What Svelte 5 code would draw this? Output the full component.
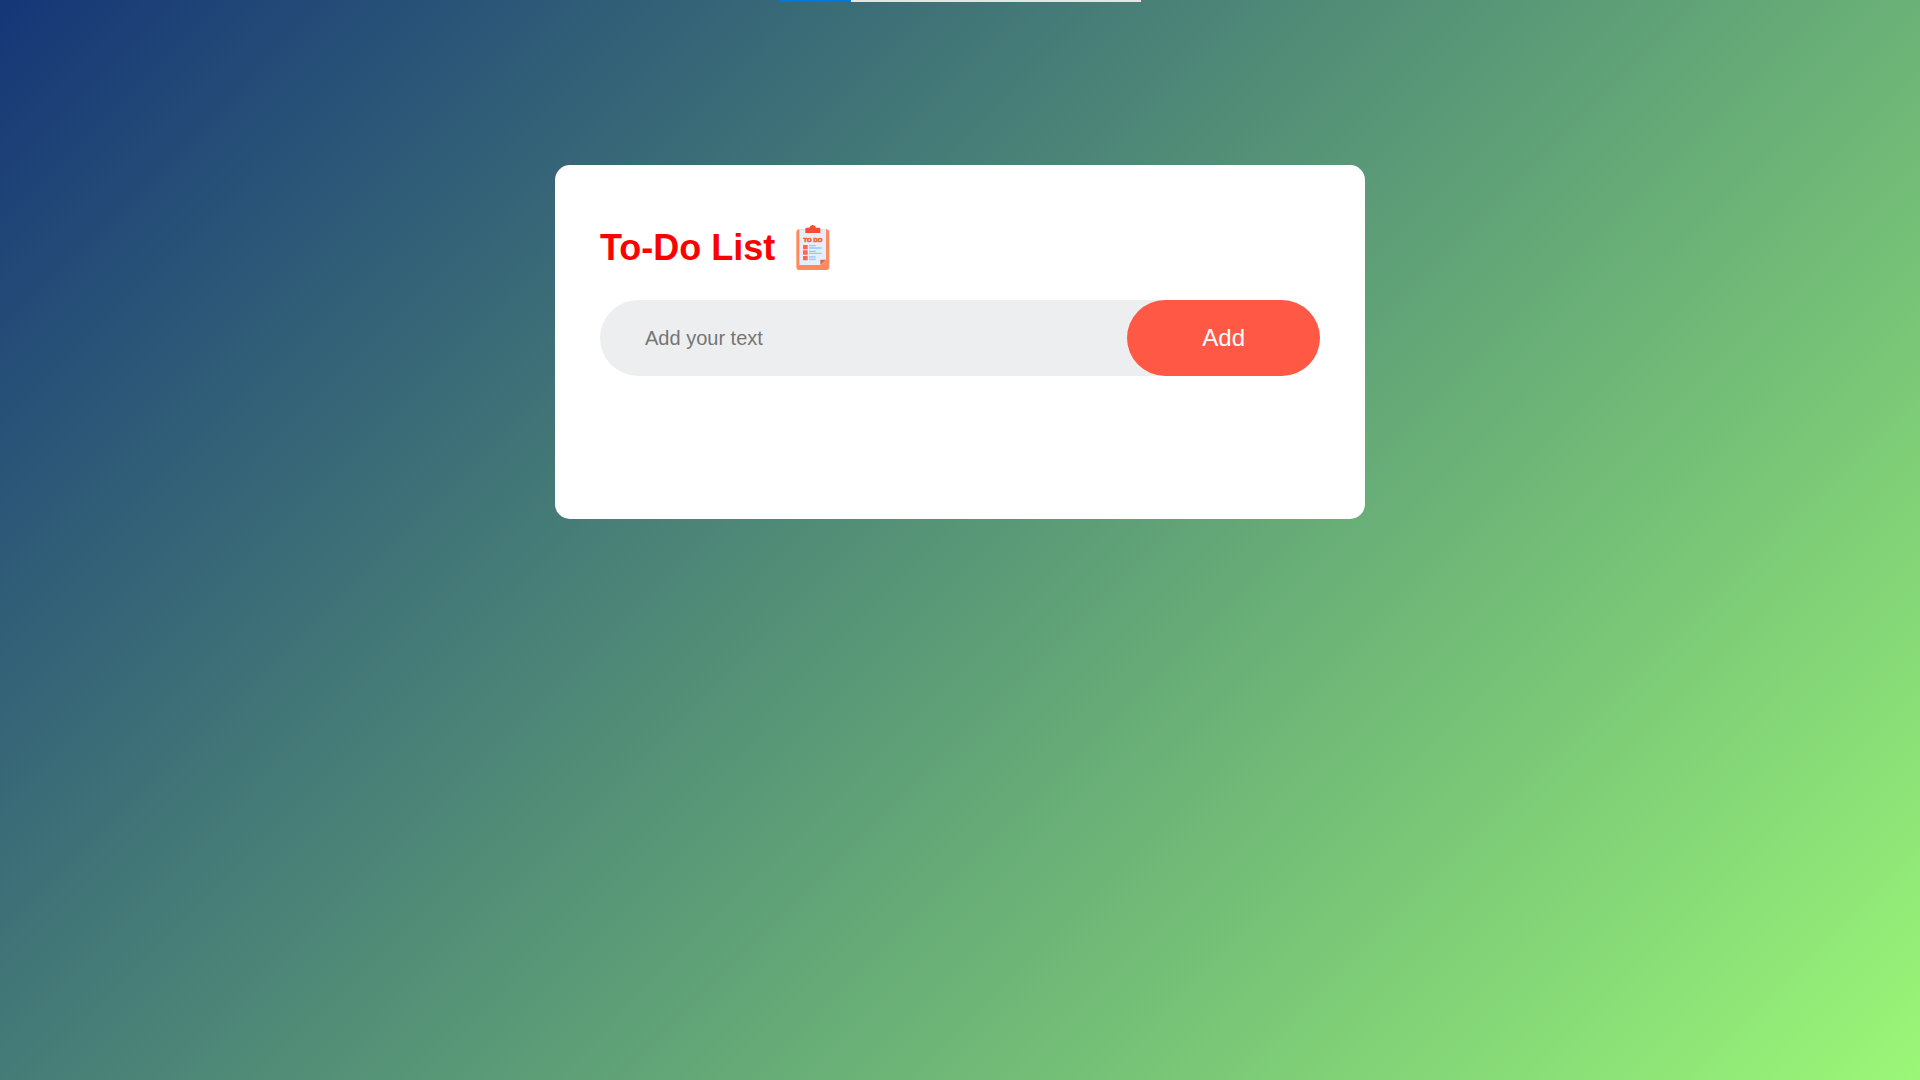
<script>
  let text = $state('');
  let tasks = $state([]);

  function addTask(event) {
    event.preventDefault();
    if (!text.trim()) return;
    tasks.push(text.trim());
    text = '';
  }
</script>

<div class="page">
  <div class="progress"><div class="progress-value"></div></div>
  <main class="card">
    <h1>
      To-Do List
      <svg viewBox="0 0 135 135" aria-hidden="true">
        <rect x="19" y="13" width="99" height="122" rx="10" fill="#ff8a5c" />
        <path d="M28 13H108V104L92 120H28Z" fill="#e4eefc" />
        <path d="M108 104H91V120Z" fill="#e5604a" />
        <path d="M46 24V12Q46 8 50 8H58Q60 0 68 0T78 8H87Q91 8 91 12V24Z" fill="#fa4b37" />
        <text x="69" y="50" text-anchor="middle">TO DO</text>
        <path d="M39 60H53V73H39ZM39 76H53V89H39ZM39 93H53V106H39Z" fill="#fa6650" />
        <path
          d="M57 62H77M57 69H95M57 79H77M57 85H95M57 96H77M57 103H77"
          stroke="#93caff"
          stroke-width="4"
        />
      </svg>
    </h1>
    <form class="row" onsubmit={addTask}>
      <input type="text" placeholder="Add your text" aria-label="Add your text" bind:value={text} />
      <button type="submit">Add</button>
    </form>
    <ul>
      {#each tasks as task}
        <li>{task}</li>
      {/each}
    </ul>
  </main>
</div>

<style>
  :global(body) {
    margin: 0;
    font-family: 'Liberation Sans', Arial, sans-serif;
  }

  .page {
    box-sizing: border-box;
    min-height: 100vh;
    padding: 0 15px 15px;
    background: linear-gradient(135deg, #153677, #9bf777);
  }

  .progress {
    width: 362px;
    max-width: 100%;
    height: 2px;
    margin: 0 auto;
    background: #e5e5e5;
  }

  .progress-value {
    width: 20%;
    height: 100%;
    background: #0078d7;
  }

  .card {
    box-sizing: border-box;
    max-width: 810px;
    margin: 163px auto 0;
    padding: 60px 45px 105px;
    border-radius: 15px;
    background: #fff;
  }

  h1 {
    display: flex;
    align-items: center;
    gap: 15px;
    margin: 0 0 30px;
    color: #f00;
    font-size: 36px;
    line-height: 45px;
  }

  svg {
    width: 45px;
    height: 45px;
    flex: none;
  }

  svg text {
    fill: #fa6432;
    stroke: #fa6432;
    stroke-width: 2px;
    font-size: 18px;
    font-weight: 700;
  }

  .row {
    display: flex;
    border-radius: 45px;
    background: #edeef0;
  }

  input {
    flex: 1;
    min-width: 0;
    padding: 15px 15px 15px 45px;
    border: 0;
    outline: 0;
    background: transparent;
    color: #222;
    font: 20px 'Liberation Sans', Arial, sans-serif;
  }

  input::placeholder {
    color: #757575;
  }

  button {
    padding: 24px 75px;
    border: 0;
    border-radius: 60px;
    background: #ff5945;
    color: #fff;
    font: 24px/28px 'Liberation Sans', Arial, sans-serif;
    cursor: pointer;
  }

  ul {
    min-height: 38px;
    margin: 0;
    padding: 0;
    list-style: none;
  }

  li {
    padding: 18px 12px 0 75px;
    color: #222;
    font-size: 24px;
  }
</style>
